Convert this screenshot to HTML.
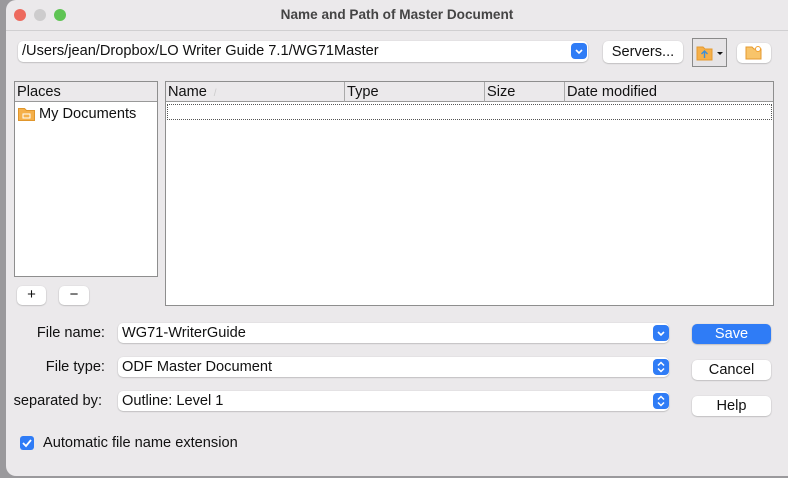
<!DOCTYPE html>
<html><head><style>
*{margin:0;padding:0;box-sizing:border-box}
body{width:788px;height:478px;background:#9a999c;font-family:"Liberation Sans",sans-serif;font-size:14.6px;color:#111;position:relative;overflow:hidden}
.win{position:absolute;left:6px;top:0;width:800px;height:476px;background:#ebe9eb;border-radius:10px 0 0 10px;overflow:hidden}
.a{position:absolute}
.tl{position:absolute;top:9px;width:12px;height:12px;border-radius:50%}
.fld{position:absolute;background:#fff;border-radius:5px;box-shadow:0 0.5px 1.5px rgba(0,0,0,.3);padding-left:4px;line-height:20px;white-space:nowrap}
.btn{position:absolute;background:#fff;border-radius:5px;box-shadow:0 0.5px 1.5px rgba(0,0,0,.3);text-align:center;line-height:20px}
.blue{position:absolute;width:16px;height:16px;background:#2f7cf6;border-radius:4px;color:#fff}
.panel{position:absolute;background:#fff;border:1px solid #8e8e8e}
.hdr{position:absolute;top:0;height:20px;background:#ebe9eb;border-right:1px solid #aaa;border-bottom:1px solid #999;line-height:20px;padding-left:2px}
.lbl{position:absolute;text-align:right;width:120px;line-height:20px}
</style></head><body>
<div class="win">
<div class="a" style="left:0;top:30px;width:800px;height:1px;background:#d0cfd1"></div>
</div>
<div class="tl" style="left:14px;background:#ed6a5e"></div>
<div class="tl" style="left:34px;background:#cdcccd"></div>
<div class="tl" style="left:54px;background:#5fc454"></div>
<div class="a" style="left:0;width:794px;top:7px;text-align:center;font-weight:bold;font-size:13.6px;color:#444">Name and Path of Master Document</div>

<div class="fld" style="left:18px;top:41px;width:570px;height:21px">/Users/jean/Dropbox/LO Writer Guide 7.1/WG71Master</div>
<div class="blue" style="left:571px;top:43px"><svg width="16" height="16"><path d="M5 7l3 3 3-3" stroke="#fff" stroke-width="1.6" fill="none"/></svg></div>
<div class="btn" style="left:603px;top:41px;width:80px;height:22px;line-height:22px">Servers...</div>
<div class="a" style="left:692px;top:38px;width:35px;height:29px;border:1px solid #8a8a8a;background:#e6e4e6"></div>
<svg class="a" style="left:696px;top:45px" width="30" height="16"><path d="M1 2h6l2 2h7v11H1z" fill="#f5b04a" stroke="#e59a30"/><path d="M8.5 13V6M5.5 9l3-3 3 3" stroke="#3c8fd8" stroke-width="1.4" fill="none"/><path d="M21 7h6l-3 3z" fill="#111"/></svg>
<div class="btn" style="left:737px;top:43px;width:34px;height:20px"></div>
<svg class="a" style="left:745px;top:45px" width="18" height="15"><path d="M1 2h6l2 2h7v10H1z" fill="#f8c46a" stroke="#e59a30"/><circle cx="13" cy="4" r="2.5" fill="#fff" stroke="#f0a030"/></svg>

<div class="panel" style="left:14px;top:81px;width:144px;height:196px">
<div class="hdr" style="left:0;width:142px;border-right:none">Places</div>
<svg class="a" style="left:3px;top:25px" width="17" height="14"><path d="M0.5 1.5h6l2 2h8v10H0.5z" fill="#f5b04a" stroke="#e0962c"/><rect x="5" y="7" width="7" height="4" fill="none" stroke="#fff"/></svg>
<div class="a" style="left:24px;top:23px;line-height:18px">My Documents</div>
</div>

<div class="panel" style="left:165px;top:81px;width:609px;height:225px">
<div class="hdr" style="left:0;width:179px">Name <span style="color:#ccc;font-size:10px">&nbsp;/</span></div>
<div class="hdr" style="left:179px;width:140px">Type</div>
<div class="hdr" style="left:319px;width:80px">Size</div>
<div class="hdr" style="left:399px;width:208px;border-right:none">Date modified</div>
<div class="a" style="left:1px;top:22px;width:605px;height:16px;border:1px dotted #555"></div>
</div>

<div class="btn" style="left:17px;top:286px;width:29px;height:19px;line-height:18px;font-size:15px">+</div>
<div class="btn" style="left:59px;top:286px;width:30px;height:19px;line-height:18px;font-size:15px">−</div>

<div class="lbl" style="left:-15px;top:323px">File name:</div>
<div class="lbl" style="left:-15px;top:357px">File type:</div>
<div class="lbl" style="left:-18px;top:391px">separated by:</div>

<div class="fld" style="left:118px;top:323px;width:551px;height:20px">WG71-WriterGuide</div>
<div class="blue" style="left:653px;top:325px"><svg width="16" height="16"><path d="M5 7l3 3 3-3" stroke="#fff" stroke-width="1.6" fill="none"/></svg></div>
<div class="fld" style="left:118px;top:357px;width:551px;height:20px">ODF Master Document</div>
<div class="blue" style="left:653px;top:359px"><svg width="16" height="16"><path d="M5 6.5l3-3 3 3M5 9.5l3 3 3-3" stroke="#fff" stroke-width="1.5" fill="none"/></svg></div>
<div class="fld" style="left:118px;top:391px;width:551px;height:20px">Outline: Level 1</div>
<div class="blue" style="left:653px;top:393px"><svg width="16" height="16"><path d="M5 6.5l3-3 3 3M5 9.5l3 3 3-3" stroke="#fff" stroke-width="1.5" fill="none"/></svg></div>

<div class="btn" style="left:692px;top:324px;width:79px;height:20px;background:#2f7cf6;color:#fff">Save</div>
<div class="btn" style="left:692px;top:360px;width:79px;height:20px">Cancel</div>
<div class="btn" style="left:692px;top:396px;width:79px;height:20px">Help</div>

<div class="blue" style="left:20px;top:436px;width:14px;height:14px;border-radius:3px"><svg width="14" height="14"><path d="M3 7l3 3 5-6" stroke="#fff" stroke-width="1.8" fill="none"/></svg></div>
<div class="a" style="left:43px;top:434px;line-height:18px">Automatic file name extension</div>
</body></html>
